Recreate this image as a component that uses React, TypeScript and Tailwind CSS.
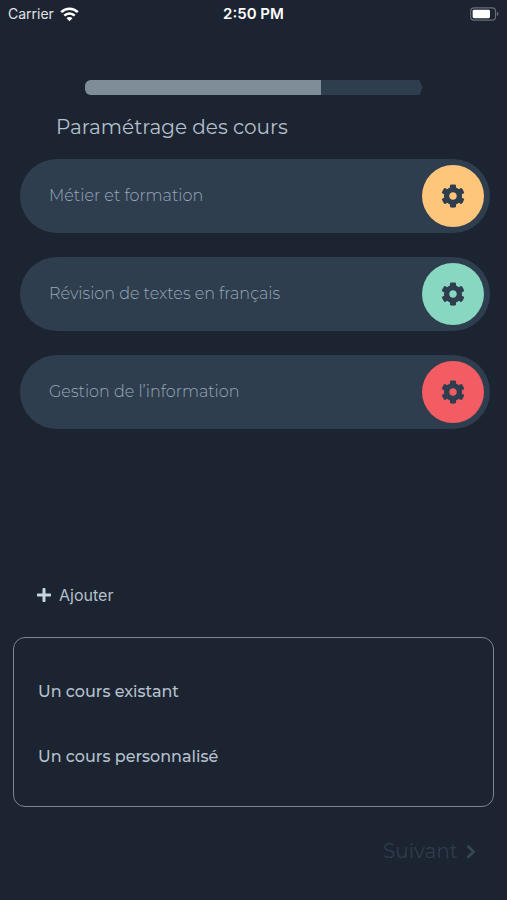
import { FaCog, FaPlus } from 'react-icons/fa';

const courses = [
  { name: 'Métier et formation', color: 'bg-[#fec67b]' },
  { name: 'Révision de textes en français', color: 'bg-[#87d7c1]' },
  { name: 'Gestion de l’information', color: 'bg-[#f25c62]' },
];

const options = ['Un cours existant', 'Un cours personnalisé'];

function StatusBar() {
  return (
    <header className="grid h-7 grid-cols-3 items-center px-2 font-['Inter',sans-serif] text-sm text-[#e0e3e8]">
      <div className="flex items-center gap-1.5">
        <span>Carrier</span>
        <svg width="19" height="15" viewBox="0 0 19 15" fill="none" stroke="#fff" strokeWidth="2.6" aria-hidden="true">
          <path d="M1.2 5.2a11.8 11.8 0 0 1 16.6 0" />
          <path d="M4.3 8.6a7.4 7.4 0 0 1 10.4 0" />
          <path d="M9.5 14.2 6.5 11.2a4.2 4.2 0 0 1 6 0Z" fill="#fff" stroke="none" />
        </svg>
      </div>
      <span className="text-center text-[15px] font-semibold text-white">2:50 PM</span>
      <svg className="justify-self-end" width="29" height="14" viewBox="0 0 31 15" aria-hidden="true">
        <rect x="0.7" y="0.9" width="26.6" height="13.2" rx="3.6" fill="none" stroke="#6c6d78" strokeWidth="1.2" />
        <rect x="2.8" y="3" width="18.6" height="9" rx="1.6" fill="#fff" />
        <path d="M28.7 5.2v4.6c1-.4 1.7-1.2 1.7-2.3s-.7-1.9-1.7-2.3Z" fill="#6c6d78" />
      </svg>
    </header>
  );
}

function Progress({ value }: { value: number }) {
  return (
    <div
      role="progressbar"
      aria-label="Progression"
      aria-valuenow={value}
      aria-valuemin={0}
      aria-valuemax={100}
      className="mx-auto mt-13 h-[15px] w-2/3 overflow-hidden rounded-l-md bg-[#2f3e4e] [clip-path:polygon(0_0,calc(100%-3px)_0,100%_50%,calc(100%-3px)_100%,0_100%)]"
    >
      <div className="h-full bg-[#7f8d99]" style={{ width: `${value}%` }} />
    </div>
  );
}

function CourseRow({ name, color }: { name: string; color: string }) {
  return (
    <li className="flex h-[74px] items-center justify-between rounded-full bg-[#2f3e4e] pl-[29px] pr-1.5">
      <span className="text-base font-light text-[#97a8bb]">{name}</span>
      <button
        type="button"
        aria-label={`Paramètres : ${name}`}
        className={`flex size-[62px] items-center justify-center rounded-full ${color}`}
      >
        <FaCog className="size-6 text-[#2f3e4e]" />
      </button>
    </li>
  );
}

export default function App() {
  return (
    <div className="flex min-h-screen flex-col bg-[#1c2331] font-['Montserrat','Inter',sans-serif] text-[#b4c0cc]">
      <StatusBar />
      <main className="flex flex-1 flex-col">
        <Progress value={70} />
        <h1 className="ml-14 mt-4 text-xl leading-8">Paramétrage des cours</h1>
        <ul className="ml-5 mr-[17px] mt-4 flex flex-col gap-6">
          {courses.map((c) => (
            <CourseRow key={c.name} {...c} />
          ))}
        </ul>

        <div className="mt-auto">
          <button type="button" className="ml-9 flex items-center gap-[7px] font-['Inter',sans-serif] text-base">
            <FaPlus className="size-4 text-[#c8d5e2]" />
            Ajouter
          </button>
          <div className="mx-[13px] mt-[30px] flex flex-col items-start gap-[41px] rounded-xl border border-[#7c8490] px-6 pb-[37px] pt-[42px] text-base font-medium">
            {options.map((o) => (
              <button key={o} type="button">
                {o}
              </button>
            ))}
          </div>
          <div className="mb-[33px] mt-7 flex justify-end pr-[31px]">
            <button type="button" className="flex items-center gap-2 text-xl leading-8 text-[#2f3c4b]">
              Suivant
              <svg width="10" height="16" viewBox="0 0 10 16" fill="none" stroke="#384554" strokeWidth="2.8" aria-hidden="true">
                <path d="m1.5 2.8 6 6-6 6" />
              </svg>
            </button>
          </div>
        </div>
      </main>
    </div>
  );
}
